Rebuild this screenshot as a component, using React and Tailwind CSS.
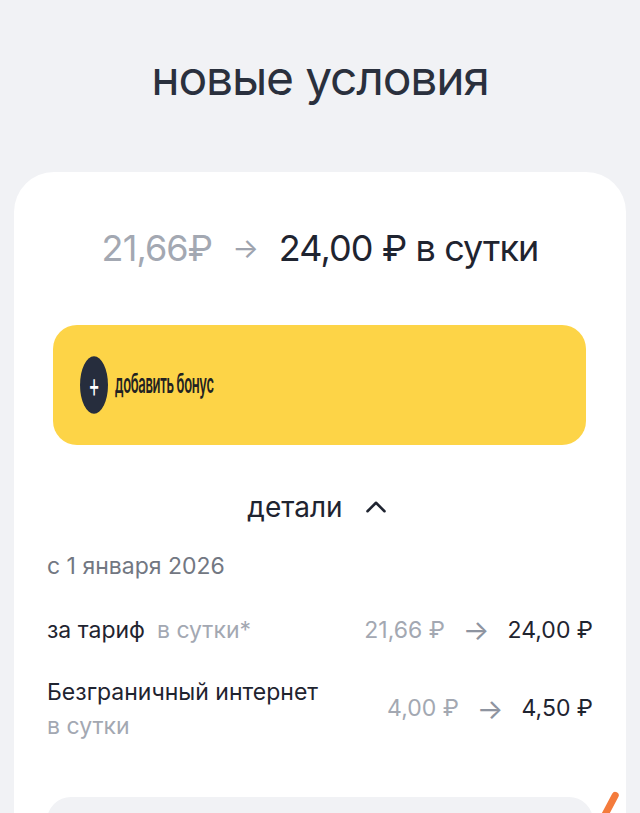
import { ChevronUp } from 'lucide-react';

const font = { fontFamily: 'Inter, "Noto Sans", sans-serif' };

function PriceRow({ label, note, noteBelow, from, to }) {
  return (
    <div className="flex items-center justify-between">
      <div className="text-[23px] leading-[34px] text-[#1f2430]">
        {label}
        {noteBelow ? (
          <div className="text-[#a3a8b2]">{note}</div>
        ) : (
          <span className="ml-3 text-[#a3a8b2]">{note}</span>
        )}
      </div>
      <div className="flex items-center text-[23px] shrink-0">
        <span className="text-[#a3a8b2]">{from}</span>
        <span className="mx-[18px] text-[#8e94a0] text-[28px] leading-none">→</span>
        <span className="text-[#1f2430]">{to}</span>
      </div>
    </div>
  );
}

export default function App() {
  return (
    <div className="h-[813px] bg-[#f1f2f5] overflow-hidden" style={font}>
      <h1 className="pt-[50px] text-center text-[48px] leading-[56px] text-[#2a303d] tracking-tight">
        новые условия
      </h1>

      <div className="relative mx-[14px] mt-[66px] bg-white rounded-[40px] px-[33px] pt-[52px] pb-10">
        <div className="flex items-center justify-center text-[36px] leading-[48px]">
          <span className="text-[#a3a8b2] tracking-tight">21,66₽</span>
          <span className="mx-5 text-[#9ea3ae] text-[28px]">→</span>
          <span className="text-[#1f2430] tracking-tight">24,00 ₽ в сутки</span>
        </div>

        <button className="mt-[53px] w-[533px] ml-[6px] h-[120px] rounded-[24px] bg-[#fdd447] flex items-center pl-[27px]">
          <div className="flex items-center gap-[7px] scale-y-[2.05] origin-left">
            <span className="w-[28px] h-[28px] rounded-full bg-[#262d3d] text-white flex items-center justify-center text-[17px] leading-none">+</span>
            <span className="text-[13px] font-semibold text-[#222] tracking-tight">добавить бонус</span>
          </div>
        </button>

        <div className="mt-[45px] flex items-center justify-center gap-4 text-[28px] leading-[34px] text-[#1f2430]">
          <span>детали</span>
          <ChevronUp size={34} strokeWidth={1.8} />
        </div>

        <div className="mt-[25px] text-[23px] leading-[34px] text-[#727782]">с 1 января 2026</div>

        <div className="mt-[30px]">
          <PriceRow label="за тариф" note="в сутки*" from="21,66 ₽" to="24,00 ₽" />
        </div>
        <div className="mt-[27px]">
          <PriceRow label="Безграничный интернет" note="в сутки" noteBelow from="4,00 ₽" to="4,50 ₽" />
        </div>

        <div className="mt-[54px] h-[80px] rounded-[24px] bg-[#f1f2f5]" />
        <span className="absolute left-[590px] top-[618px] w-[7px] h-[40px] rounded-full bg-[#f47b3c] rotate-[28deg]" />
      </div>
    </div>
  );
}
